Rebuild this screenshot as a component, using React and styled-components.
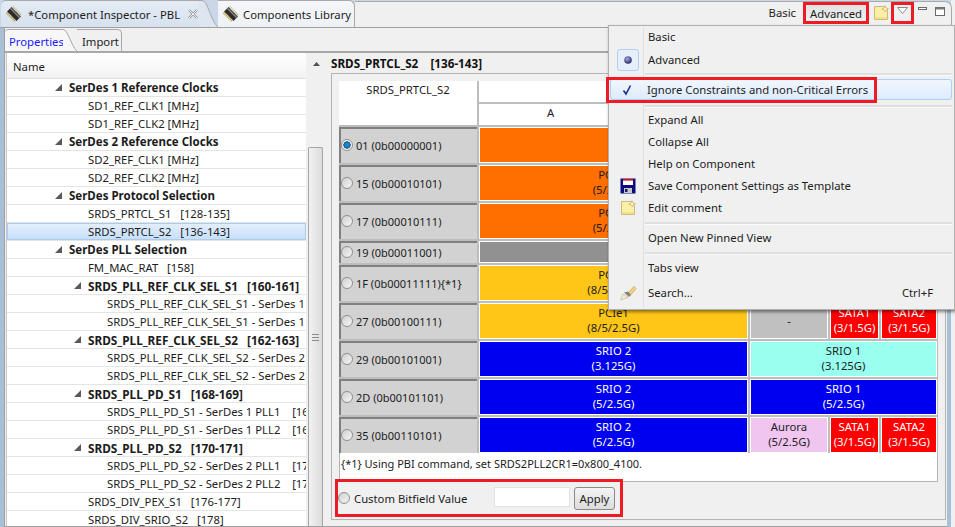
import React from "react";
import styled, { createGlobalStyle } from "styled-components";

const Global = createGlobalStyle`
  html, body { margin: 0; padding: 0; width: 955px; height: 527px; overflow: hidden; background: #f0f0f0; }
  * { box-sizing: border-box; }
  #root { width: 955px; height: 527px; }
`;

const Page = styled.div`
  position: relative;
  width: 955px;
  height: 527px;
  overflow: hidden;
  display: flex;
  flex-direction: column;
  font-family: "Noto Sans", "Open Sans", sans-serif;
  font-size: 11.3px;
  color: #1c1c1c;
  background: linear-gradient(90deg, #a9bfd8 0, #a9bfd8 951px, #f0f0f0 951px);
`;

const TopBar = styled.div`
  height: 28px;
  flex: none;
  display: flex;
  align-items: flex-end;
  background: linear-gradient(90deg, #c9d7e7 0, #c9d7e7 951px, #f0f0f0 951px);
  border-bottom: 1px solid #a0a0a0;
`;

const EditorTab = styled.div`
  display: flex;
  align-items: center;
  height: 27px;
  padding: ${p => (p.$active ? "0 0 0 5px" : "0 3px 0 5px")};
  gap: ${p => (p.$active ? 6 : 4)}px;
  background: ${p => (p.$active ? "linear-gradient(#e4ecf5, #d6e1ee)" : "linear-gradient(#f4f6f9, #eef1f5)")};
  border-top: 1px solid #a8a8a8;
  border-right: ${p => (p.$active ? "none" : "1px solid #a8a8a8")};
  border-radius: ${p => (p.$active ? "5px 0 0 0" : "0 6px 0 0")};
  margin-left: ${p => (p.$active ? "1px" : "0")};
  flex: none;
`;

const TabTitle = styled.span`
  white-space: nowrap;
`;

const CloseX = styled.svg`
  display: block;
  margin-left: 1px;
`;

const TabCurve = styled.svg`
  flex: none;
  display: block;
`;

const Actions = styled.div`
  flex: 1;
  height: 26px;
  align-self: flex-end;
  display: flex;
  align-items: flex-start;
  justify-content: flex-end;
  background: #f0f0f0;
  border-top: 1px solid #a8a8a8;
  border-right: 1px solid #a8a8a8;
  border-top-right-radius: 7px;
  margin-right: 3px;
  padding-right: 6px;
`;

const ModeText = styled.span`
  margin-right: 7px;
  line-height: 22px;
`;

const ModeButton = styled.span`
  width: 66px;
  height: 22px;
  display: flex;
  align-items: center;
  justify-content: center;
  background: linear-gradient(#e2e2e2, #f0f0f0);
  border: 3px solid #ed1c24;
  margin-right: 4px;
`;

const NoteSlot = styled.span`
  margin-top: 3px;
  display: block;
  height: 16px;
`;

const MenuArrow = styled.span`
  width: 23px;
  height: 22px;
  display: flex;
  align-items: flex-start;
  justify-content: center;
  padding-top: 2px;
  margin-left: 2px;
  border: 3px solid #ed1c24;
`;

const ViewBtn = styled.svg`
  display: block;
  margin-top: 5px;
  margin-left: ${p => p.$ml}px;
`;

const Main = styled.div`
  flex: 1;
  min-height: 0;
  margin-left: 4px;
  margin-right: 8px;
  background: #f0f0f0;
  border-left: 1px solid #a0a0a0;
  border-bottom: 1px solid #a0a0a0;
  display: flex;
  flex-direction: column;
`;

const SubTabs = styled.div`
  height: 25px;
  flex: none;
  display: flex;
  align-items: flex-end;
  border-bottom: 2px solid #a8a8a8;
`;

const SubTab = styled.div`
  height: 22px;
  width: ${p => p.$w}px;
  display: flex;
  align-items: center;
  padding: 1px 0 0 ${p => p.$pl}px;
  white-space: nowrap;
  color: ${p => (p.$active ? "#1a1aff" : "#1c1c1c")};
  background: ${p => (p.$active ? "#f7f7f7" : "#f0f0f0")};
  border-top: 1px solid #a8a8a8;
  border-right: ${p => (p.$active ? "none" : "1px solid #a8a8a8")};
  border-radius: ${p => (p.$active ? "4px 0 0 0" : "0 5px 0 0")};
`;

const Split = styled.div`
  flex: 1;
  min-height: 0;
  display: flex;
`;

const TreePane = styled.div`
  width: 300px;
  margin-left: 1px;
  flex: none;
  background: #fff;
  border-left: 1px solid #c8c8c8;
  display: flex;
  flex-direction: column;
  overflow: hidden;
`;

const TreeHead = styled.div`
  height: 25px;
  flex: none;
  padding: 1px 0 0 6px;
  display: flex;
  align-items: center;
  background: linear-gradient(#ffffff, #f2f2f2);
  border-bottom: 1px solid #e0e0e0;
  margin-top: 1px;
`;

const TreeRow = styled.div`
  height: 18px;
  flex: none;
  display: flex;
  align-items: center;
  white-space: pre;
  padding-left: ${p => p.$indent}px;
  font-weight: ${p => (p.$bold ? 700 : 400)};
  font-size: ${p => p.$size};
  border-bottom: 1px solid #e4e4e4;
  background: ${p => (p.$selected ? "linear-gradient(#e4effc, #c6def9)" : "#fff")};
  box-shadow: ${p => (p.$selected ? "inset 0 0 0 1px #a9cbee" : "none")};
`;

const Twist = styled.svg`
  flex: none;
  margin-right: 7px;
  display: block;
`;

const ScrollBar = styled.div`
  width: 16px;
  margin-left: 2px;
  flex: none;
  background: #f0f0f0;
  display: flex;
  flex-direction: column;
  align-items: stretch;
  padding-top: 9px;
`;

const ScrollUp = styled.svg`
  display: block;
  align-self: center;
  flex: none;
`;

const ScrollThumb = styled.div`
  margin-top: 81px;
  flex: 1;
  margin-right: 1px;
  border: 1px solid #a5a5a5;
  border-bottom: none;
  border-radius: 2px 2px 0 0;
  background: linear-gradient(90deg, #f2f2f2, #dcdcdc);
  display: flex;
  justify-content: center;
  padding-top: 186px;
`;

const Grip = styled.svg`
  display: block;
`;

const DetailPane = styled.div`
  flex: 1;
  min-width: 0;
  margin-left: 7px;
  display: flex;
  flex-direction: column;
`;

const DetailTitle = styled.div`
  height: 20px;
  flex: none;
  display: flex;
  align-items: center;
  font-weight: 700;
  font-size: 11.7px;
  white-space: pre;
  color: #111;
`;

const Group = styled.div`
  width: 615px;
  height: 447px;
  flex: none;
  border: 1px solid #b4b4b4;
  padding: 7px 7px 0 7px;
`;

const Matrix = styled.div`
  width: 599px;
  display: grid;
  grid-template-columns: 138px 143px 124px 78px 49px 56px;
  grid-template-rows: 21px 21px 36px 36px 36px 22px 36px 36px 36px 36px 36px;
  gap: 2px;
  background: #bdbdbd;
`;

const HeadCell = styled.div`
  background: #fff;
  text-align: center;
  grid-column: ${p => p.$col};
  grid-row: ${p => p.$row};
  line-height: 17px;
`;

const RowHead = styled.div`
  grid-column: 1;
  background: #d2d2d2;
  border-top: 2px solid #808080;
  border-left: 2px solid #808080;
  display: flex;
  align-items: center;
  gap: 3px;
  padding-bottom: 2px;
  white-space: nowrap;
  font-size: 11px;
`;

const Radio = styled.span`
  width: 12px;
  height: 12px;
  flex: none;
  border-radius: 50%;
  border: 1px solid #8e8f8f;
  background: ${p => (p.$on
    ? "radial-gradient(circle at 50% 50%, #1b86c8 0 2px, #0b4d80 3.4px, #f2f2f2 3.9px)"
    : "linear-gradient(135deg, #cfcfcf, #f6f6f6)")};
`;

const Lane = styled.div`
  background: ${p => p.$bg};
  color: ${p => p.$fg || "#1c1c1c"};
  border: 1px solid #fff;
  padding-bottom: 2px;
  text-align: center;
  line-height: 15px;
  display: flex;
  flex-direction: column;
  justify-content: center;
  white-space: nowrap;
  overflow: hidden;
  grid-column: ${p => p.$col};
`;

const Note = styled.div`
  width: 599px;
  height: 29px;
  background: #fff;
  border: 1px solid #b4b4b4;
  border-top: none;
  padding: 3px 0 0 1px;
  line-height: 16px;
  font-size: 11px;
`;

const CustomRow = styled.div`
  width: 288px;
  height: 38px;
  margin: -3px 0 0 -4px;
  border: 3px solid #ed1c24;
  display: flex;
  align-items: center;
  position: relative;
`;

const CustomLabel = styled.span`
  margin-left: 4px;
  width: 140px;
  flex: none;
`;

const ValueInput = styled.div`
  width: 76px;
  height: 20px;
  background: #fff;
  border: 1px solid #e2e2e2;
  margin-top: -3px;
  flex: none;
`;

const ApplyBtn = styled.div`
  width: 41px;
  height: 23px;
  margin-left: 4px;
  border: 1px solid #8a8a8a;
  border-radius: 3px;
  background: linear-gradient(#f4f4f4, #dcdcdc);
  display: flex;
  align-items: center;
  justify-content: center;
  flex: none;
`;

const Menu = styled.div`
  position: absolute;
  left: 608px;
  top: 25px;
  width: 347px;
  height: 285px;
  background: #f0f0f0;
  border: 1px solid #b0b0b0;
  box-shadow: 1px 2px 3px rgba(0, 0, 0, .45);
  padding: 0 2px;
  display: flex;
  flex-direction: column;
`;

const MenuGutter = styled.div`
  position: absolute;
  left: 34px;
  top: 1px;
  bottom: 2px;
  width: 1px;
  background: #e0e0e0;
`;

const MenuItem = styled.div`
  height: ${p => p.$h || 22}px;
  flex: none;
  display: flex;
  align-items: center;
  position: relative;
  z-index: 1;
`;

const MenuIcon = styled.span`
  width: 36px;
  flex: none;
  padding-right: 3px;
  display: flex;
  align-items: center;
  justify-content: center;
`;

const Checked = styled.span`
  width: 22px;
  height: 22px;
  display: flex;
  align-items: center;
  justify-content: center;
  border: 1px solid #aecff7;
  border-radius: 3px;
  background: #e6f0fc;
`;

const MenuLabel = styled.span`
  flex: 1;
  margin: 0 0 2px 1px;
  white-space: nowrap;
`;

const Shortcut = styled.span`
  margin: 0 19px 2px 0;
`;

const MenuSep = styled.div`
  height: ${p => p.$h}px;
  flex: none;
  display: flex;
  align-items: center;
  padding-left: 34px;
  &::after {
    content: "";
    flex: 1;
    height: 2px;
    background: #e0e0e0;
    border-bottom: 1px solid #fbfbfb;
  }
`;

const HotWrap = styled.div`
  height: 26px;
  width: 271px;
  flex: none;
  margin-left: -5px;
  padding-left: 4px;
  display: flex;
  align-items: center;
  outline: 3px solid #ed1c24;
  outline-offset: -3px;
  position: relative;
  z-index: 2;
`;

const HotBg = styled.div`
  position: absolute;
  left: 4px;
  top: 2px;
  width: 342px;
  height: 21px;
  border: 1px solid #aecff7;
  border-radius: 3px;
  background: linear-gradient(#f2f7fe, #dcebfc);
  z-index: -1;
`;

const Chip = () => (
  <svg width="16" height="16" viewBox="0 0 18 18">
    <g transform="rotate(45 9 9)">
      <rect x="1.5" y="5.5" width="15" height="7" fill="#2b2b2b" />
      <rect x="1.5" y="6.5" width="15" height="1.6" fill="#8a8a8a" />
      {[2, 4, 6, 8, 10, 12, 14].map(x => (
        <g key={x}>
          <rect x={x} y="3" width="1.2" height="2.5" fill="#c8c090" />
          <rect x={x} y="12.5" width="1.2" height="2.5" fill="#b8a040" />
        </g>
      ))}
    </g>
  </svg>
);

const NoteIcon = ({ s = 16 }) => (
  <svg width={s} height={s} viewBox="0 0 16 16" style={{ display: "block" }}>
    <path d="M1.5 1.5H11L14.5 5V14.5H1.5Z" fill="#fbeea6" stroke="#cdbb7a" />
    <path d="M2 12H14V14H2Z" fill="#f3e08e" />
    <path d="M12 0.5L12.8 3L15.5 3.5L13 4.6L12.5 7L11 4.8L8.8 4.3L11 3.3Z" fill="#fff" stroke="#c8a040" strokeWidth=".6" />
  </svg>
);

const Floppy = () => (
  <svg width="16" height="16" viewBox="0 0 16 16">
    <rect x="0.5" y="0.5" width="15" height="15" fill="#0b0b80" />
    <rect x="3" y="1" width="10" height="6" fill="#fff" />
    <rect x="3" y="1" width="10" height="1.6" fill="#e01010" />
    <rect x="4" y="10" width="8" height="5" fill="#c8c8c8" />
    <rect x="5" y="11" width="2.5" height="3" fill="#1a1a60" />
  </svg>
);

const Brush = () => (
  <svg width="18" height="16" viewBox="0 0 18 16">
    <path d="M9 8L15 1.5L17 3.5L11.5 10Z" fill="#f5d58a" stroke="#c89a40" strokeWidth=".8" />
    <path d="M5 7.5L9 6.5L12 10L10 12Z" fill="#8a8478" />
    <path d="M1.5 15L4 9L9 12.5Z" fill="#f4efc8" stroke="#b8b090" strokeWidth=".6" />
  </svg>
);

const Tick = () => (
  <svg width="12" height="12" viewBox="0 0 12 12">
    <path d="M2.5 6.5L5 10L9.5 1.5" fill="none" stroke="#1c2a8c" strokeWidth="1.6" />
  </svg>
);

const Bullet = () => (
  <svg width="8" height="8" viewBox="0 0 8 8">
    <defs>
      <radialGradient id="bl" cx="40%" cy="35%" r="70%">
        <stop offset="0" stopColor="#a8a8e0" />
        <stop offset="1" stopColor="#20205c" />
      </radialGradient>
    </defs>
    <circle cx="4" cy="4" r="3.8" fill="url(#bl)" />
  </svg>
);

const ORANGE = "#ff6f00", YEL = "#ffc618", BLUE = "#0000f0", RED = "#ff0000", GRAY = "#919191", SILVER = "#c0c0c0";

const tree = [
  [1, 1, "SerDes 1 Reference Clocks"],
  [0, 0, "SD1_REF_CLK1 [MHz]"],
  [0, 0, "SD1_REF_CLK2 [MHz]"],
  [1, 1, "SerDes 2 Reference Clocks"],
  [0, 0, "SD2_REF_CLK1 [MHz]"],
  [0, 0, "SD2_REF_CLK2 [MHz]"],
  [1, 1, "SerDes Protocol Selection"],
  [0, 0, "SRDS_PRTCL_S1   [128-135]"],
  [0, 0, "SRDS_PRTCL_S2   [136-143]", true],
  [1, 1, "SerDes PLL Selection"],
  [0, 0, "FM_MAC_RAT   [158]"],
  [2, 1, "SRDS_PLL_REF_CLK_SEL_S1   [160-161]"],
  [3, 0, "SRDS_PLL_REF_CLK_SEL_S1 - SerDes 1"],
  [3, 0, "SRDS_PLL_REF_CLK_SEL_S1 - SerDes 1"],
  [2, 1, "SRDS_PLL_REF_CLK_SEL_S2   [162-163]"],
  [3, 0, "SRDS_PLL_REF_CLK_SEL_S2 - SerDes 2"],
  [3, 0, "SRDS_PLL_REF_CLK_SEL_S2 - SerDes 2"],
  [2, 1, "SRDS_PLL_PD_S1   [168-169]"],
  [3, 0, "SRDS_PLL_PD_S1 - SerDes 1 PLL1    [168]"],
  [3, 0, "SRDS_PLL_PD_S1 - SerDes 1 PLL2    [169]"],
  [2, 1, "SRDS_PLL_PD_S2   [170-171]"],
  [3, 0, "SRDS_PLL_PD_S2 - SerDes 2 PLL1    [170]"],
  [3, 0, "SRDS_PLL_PD_S2 - SerDes 2 PLL2    [171]"],
  [0, 0, "SRDS_DIV_PEX_S1   [176-177]"],
  [0, 0, "SRDS_DIV_SRIO_S2   [178]"],
];

const INDENTS = [81, 48, 67, 100];
const SIZES = ["11.3px", "11.5px", "11.8px", "11.3px"];

const hiddenTail = [
  { col: "4", bg: SILVER, t: [] },
  { col: "5", bg: RED, t: [] },
  { col: "6", bg: RED, t: [] },
];

const sata = [
  { col: "5", bg: RED, fg: "#fff", t: ["SATA1", "(3/1.5G)"] },
  { col: "6", bg: RED, fg: "#fff", t: ["SATA2", "(3/1.5G)"] },
];

const rows = [
  ["01 (0b00000001)", true, [{ col: "2 / 7", bg: ORANGE, t: [] }]],
  ["15 (0b00010101)", false, [{ col: "2 / 4", bg: ORANGE, t: ["PCIe1", "(5/2.5G)"] }, ...hiddenTail]],
  ["17 (0b00010111)", false, [{ col: "2 / 4", bg: ORANGE, t: ["PCIe1", "(5/2.5G)"] }, ...hiddenTail]],
  ["19 (0b00011001)", false, [{ col: "2 / 7", bg: GRAY, t: [] }]],
  ["1F (0b00011111){*1}", false, [{ col: "2 / 4", bg: YEL, t: ["PCIe1", "(8/5/2.5G)"] }, ...hiddenTail]],
  ["27 (0b00100111)", false, [{ col: "2 / 4", bg: YEL, t: ["PCIe1", "(8/5/2.5G)"] }, { col: "4", bg: SILVER, t: ["-"] }, ...sata]],
  ["29 (0b00101001)", false, [{ col: "2 / 4", bg: BLUE, fg: "#fff", t: ["SRIO 2", "(3.125G)"] }, { col: "4 / 7", bg: "#99ffee", t: ["SRIO 1", "(3.125G)"] }]],
  ["2D (0b00101101)", false, [{ col: "2 / 4", bg: BLUE, fg: "#fff", t: ["SRIO 2", "(5/2.5G)"] }, { col: "4 / 7", bg: BLUE, fg: "#fff", t: ["SRIO 1", "(5/2.5G)"] }]],
  ["35 (0b00110101)", false, [{ col: "2 / 4", bg: BLUE, fg: "#fff", t: ["SRIO 2", "(5/2.5G)"] }, { col: "4", bg: "#f0c6f0", t: ["Aurora", "(5/2.5G)"] }, ...sata]],
];

export default function App() {
  return (
    <Page>
      <Global />
      <TopBar>
        <EditorTab $active>
          <Chip />
          <TabTitle>*Component Inspector - PBL</TabTitle>
          <CloseX width="12" height="12" viewBox="0 0 12 12">
            <path d="M2 2L10 10M10 2L2 10" stroke="#9a9a9a" strokeWidth="2.4" />
            <path d="M2 2L10 10M10 2L2 10" stroke="#f4f4f4" strokeWidth="1" />
          </CloseX>
        </EditorTab>
        <TabCurve width="19" height="27" viewBox="0 0 19 27">
          <path d="M0 0.5H3C9 0.5 11 20 19 27H0Z" fill="#dce5f0" />
          <path d="M0 0.5H3C9 0.5 11 20 19 27" fill="none" stroke="#a8a8a8" />
        </TabCurve>
        <EditorTab>
          <Chip />
          <TabTitle>Components Library</TabTitle>
        </EditorTab>
        <Actions>
          <ModeText>Basic</ModeText>
          <ModeButton>Advanced</ModeButton>
          <NoteSlot><NoteIcon /></NoteSlot>
          <MenuArrow>
            <svg width="11" height="7" viewBox="0 0 11 7">
              <path d="M0.5 0.5H10.5L5.5 6.5Z" fill="#fff" stroke="#8a8a8a" />
            </svg>
          </MenuArrow>
          <ViewBtn width="9" height="3" viewBox="0 0 9 3" $ml={4}>
            <rect x="0.5" y="0.5" width="8" height="2" fill="#fff" stroke="#6a6a6a" />
          </ViewBtn>
          <ViewBtn width="10" height="9" viewBox="0 0 10 9" $ml={8}>
            <rect x="0.5" y="0.5" width="9" height="8" fill="#fff" stroke="#6a6a6a" />
            <rect x="0.5" y="0.5" width="9" height="2" fill="#7a7a7a" />
          </ViewBtn>
        </Actions>
      </TopBar>
      <Main>
        <SubTabs>
          <SubTab $active $w={58} $pl={4}>Properties</SubTab>
          <TabCurve width="14" height="22" viewBox="0 0 14 22">
            <path d="M0 0.5C5 0.5 8 17 14 22H0Z" fill="#f7f7f7" />
            <path d="M0 0.5C5 0.5 8 17 14 22" fill="none" stroke="#a8a8a8" />
          </TabCurve>
          <SubTab $w={45} $pl={5}>Import</SubTab>
        </SubTabs>
        <Split>
          <TreePane>
            <TreeHead>Name</TreeHead>
            {tree.map(([lvl, bold, text, sel], i) => (
              <TreeRow key={i} $indent={INDENTS[lvl]} $size={SIZES[lvl]} $bold={!!bold} $selected={!!sel}>
                {bold ? (
                  <Twist width="7" height="7" viewBox="0 0 7 7">
                    <path d="M0 7H7V0Z" fill="#595959" />
                  </Twist>
                ) : null}
                {text}
              </TreeRow>
            ))}
          </TreePane>
          <ScrollBar>
            <ScrollUp width="7" height="4" viewBox="0 0 7 4">
              <path d="M0 4L3.5 0L7 4Z" fill="#505050" />
            </ScrollUp>
            <ScrollThumb>
              <Grip width="7" height="7" viewBox="0 0 7 7">
                <path d="M0 .5H7M0 3.5H7M0 6.5H7" stroke="#8a8a8a" />
              </Grip>
            </ScrollThumb>
          </ScrollBar>
          <DetailPane>
            <DetailTitle>SRDS_PRTCL_S2    [136-143]</DetailTitle>
            <Group>
              <Matrix>
                <HeadCell $col="1" $row="1 / 3">SRDS_PRTCL_S2</HeadCell>
                <HeadCell $col="2 / 7" $row="1" />
                <HeadCell $col="2" $row="2">A</HeadCell>
                <HeadCell $col="3" $row="2" />
                <HeadCell $col="4" $row="2" />
                <HeadCell $col="5 / 7" $row="2" />
                {rows.map(([label, on, cells]) => (
                  <React.Fragment key={label}>
                    <RowHead>
                      <Radio $on={on} />
                      <span>{label}</span>
                    </RowHead>
                    {cells.map((c, i) => (
                      <Lane key={i} $col={c.col} $bg={c.bg} $fg={c.fg}>
                        {c.t.map(l => <span key={l}>{l}</span>)}
                      </Lane>
                    ))}
                  </React.Fragment>
                ))}
              </Matrix>
              <Note>{"{*1} Using PBI command, set SRDS2PLL2CR1=0x800_4100."}</Note>
              <CustomRow>
                <Radio />
                <CustomLabel>Custom Bitfield Value</CustomLabel>
                <ValueInput />
                <ApplyBtn>Apply</ApplyBtn>
              </CustomRow>
            </Group>
          </DetailPane>
        </Split>
      </Main>
      <Menu>
        <MenuGutter />
        <MenuItem><MenuIcon /><MenuLabel>Basic</MenuLabel></MenuItem>
        <MenuItem $h={24}><MenuIcon><Checked><Bullet /></Checked></MenuIcon><MenuLabel>Advanced</MenuLabel></MenuItem>
        <MenuSep $h={5} />
        <HotWrap>
          <HotBg />
          <MenuIcon><Tick /></MenuIcon>
          <MenuLabel>Ignore Constraints and non-Critical Errors</MenuLabel>
        </HotWrap>
        <MenuSep $h={6} />
        <MenuItem><MenuIcon /><MenuLabel>Expand All</MenuLabel></MenuItem>
        <MenuItem><MenuIcon /><MenuLabel>Collapse All</MenuLabel></MenuItem>
        <MenuItem><MenuIcon /><MenuLabel>Help on Component</MenuLabel></MenuItem>
        <MenuItem><MenuIcon><Floppy /></MenuIcon><MenuLabel>Save Component Settings as Template</MenuLabel></MenuItem>
        <MenuItem><MenuIcon><NoteIcon /></MenuIcon><MenuLabel>Edit comment</MenuLabel></MenuItem>
        <MenuSep $h={8} />
        <MenuItem><MenuIcon /><MenuLabel>Open New Pinned View</MenuLabel></MenuItem>
        <MenuSep $h={8} />
        <MenuItem><MenuIcon /><MenuLabel>Tabs view</MenuLabel></MenuItem>
        <MenuItem $h={28}><MenuIcon><Brush /></MenuIcon><MenuLabel>Search...</MenuLabel><Shortcut>Ctrl+F</Shortcut></MenuItem>
      </Menu>
    </Page>
  );
}
